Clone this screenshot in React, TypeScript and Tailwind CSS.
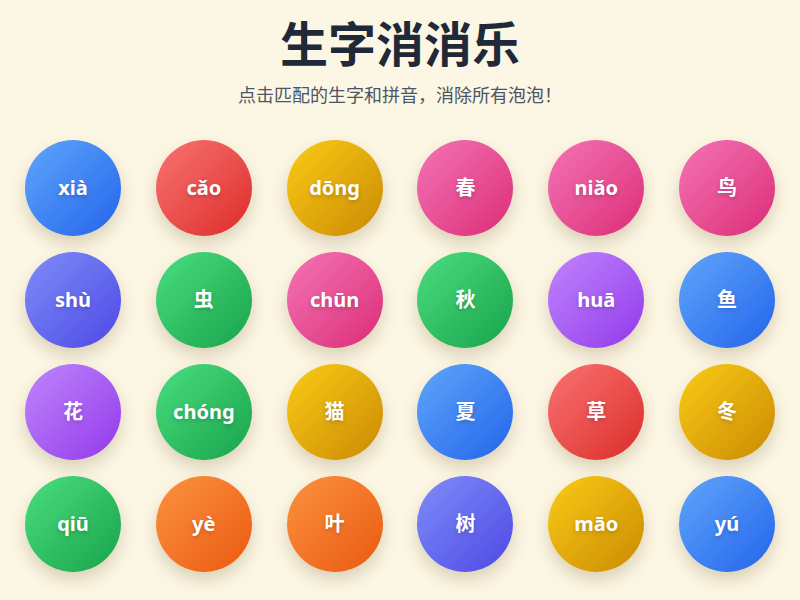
import React from 'react';

type Bubble = { text: string; color: string };

// gradient classes per bubble colour
const colors: Record<string, string> = {
  blue: 'from-[#60a5fa] to-[#2563eb]',
  red: 'from-[#f87171] to-[#dc2626]',
  yellow: 'from-[#facc15] to-[#ca8a04]',
  pink: 'from-[#f472b6] to-[#db2777]',
  indigo: 'from-[#818cf8] to-[#4f46e5]',
  green: 'from-[#4ade80] to-[#16a34a]',
  purple: 'from-[#c084fc] to-[#9333ea]',
  orange: 'from-[#fb923c] to-[#ea580c]',
};

const bubbles: Bubble[] = [
  { text: 'xià', color: 'blue' },
  { text: 'cǎo', color: 'red' },
  { text: 'dōng', color: 'yellow' },
  { text: '春', color: 'pink' },
  { text: 'niǎo', color: 'pink' },
  { text: '鸟', color: 'pink' },
  { text: 'shù', color: 'indigo' },
  { text: '虫', color: 'green' },
  { text: 'chūn', color: 'pink' },
  { text: '秋', color: 'green' },
  { text: 'huā', color: 'purple' },
  { text: '鱼', color: 'blue' },
  { text: '花', color: 'purple' },
  { text: 'chóng', color: 'green' },
  { text: '猫', color: 'yellow' },
  { text: '夏', color: 'blue' },
  { text: '草', color: 'red' },
  { text: '冬', color: 'yellow' },
  { text: 'qiū', color: 'green' },
  { text: 'yè', color: 'orange' },
  { text: '叶', color: 'orange' },
  { text: '树', color: 'indigo' },
  { text: 'māo', color: 'yellow' },
  { text: 'yú', color: 'blue' },
];

const App: React.FC = () => {
  return (
    <div
      className="w-[800px] h-[600px] overflow-hidden bg-[#fcf6e4] flex flex-col items-center"
      style={{ fontFamily: '"Noto Sans", "Noto Sans CJK SC", sans-serif' }}
    >
      <h1 className="mt-[14px] text-[48px] leading-[60px] font-bold text-[#1f2937]">生字消消乐</h1>
      <p className="mt-[8px] text-[18px] leading-[26px] text-[#4b5563]">点击匹配的生字和拼音，消除所有泡泡！</p>

      <div className="mt-[32px] w-full px-[25px] grid grid-cols-6 gap-y-[16px] justify-between" style={{ gridTemplateColumns: 'repeat(6, 96px)' }}>
        {bubbles.map((b, i) => (
          <div
            key={i}
            className={`w-[96px] h-[96px] rounded-full bg-gradient-to-br ${colors[b.color]} flex items-center justify-center shadow-[0_8px_16px_rgba(120,100,50,0.25)]`}
          >
            <span className="text-white text-[20px] font-bold [text-shadow:0_2px_4px_rgba(0,0,0,0.2)]">{b.text}</span>
          </div>
        ))}
      </div>
    </div>
  );
};

export default App;
